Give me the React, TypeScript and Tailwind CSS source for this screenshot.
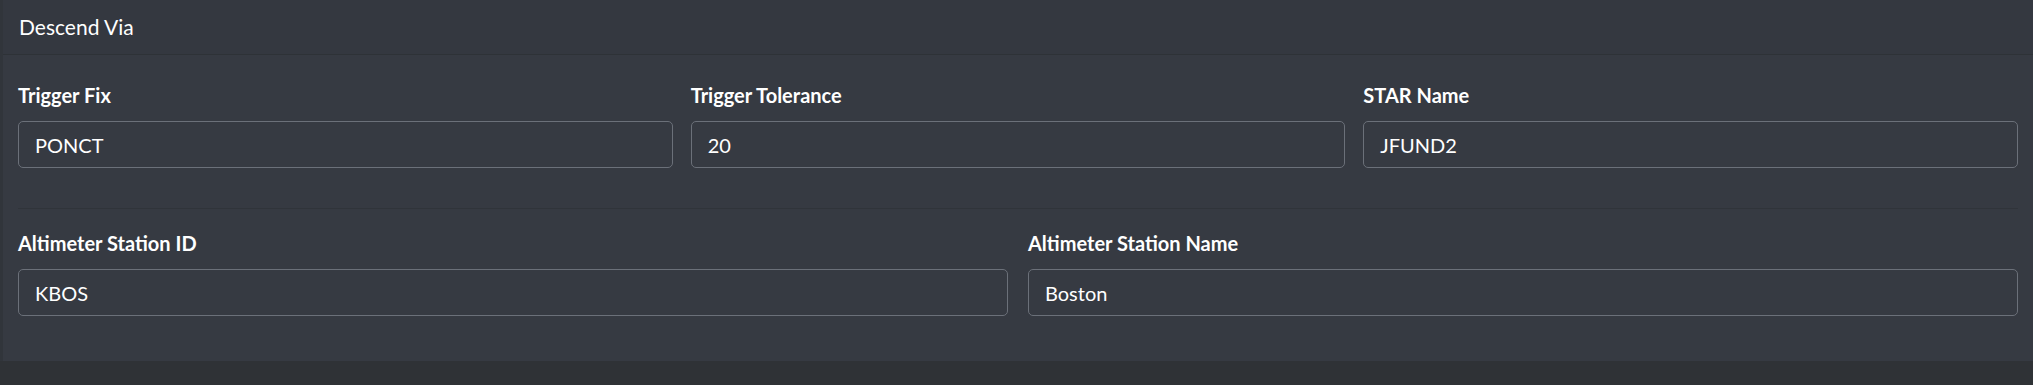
import React from "react"

type FieldProps = { label: string; value: string }

function Field({ label, value }: FieldProps) {
  return (
    <div className="flex flex-col">
      <label className="mb-[10px] h-[31px] text-[20px] font-bold leading-[31px] text-white">{label}</label>
      <div className="flex h-[47px] items-center rounded-[5px] border border-[#6b7079] bg-[#363a42] px-[16px] text-[20px] text-white">
        {value}
      </div>
    </div>
  )
}

export default function App() {
  return (
    <div
      className="h-[385px] w-full bg-[#2f3236]"
      style={{ fontFamily: '"Lato", "Noto Sans", sans-serif' }}
    >
      <div className="h-[361px] border-l-[3px] border-[#31353b] bg-[#363a42]">
        <div className="flex h-[55px] items-center border-b border-[#2e3237] bg-[#343840] px-[16px] text-[21px] text-white">
          Descend Via
        </div>
        <div className="px-[15px] pt-[25px]">
          <div className="grid grid-cols-3 gap-[18px]">
            <Field label="Trigger Fix" value="PONCT" />
            <Field label="Trigger Tolerance" value="20" />
            <Field label="STAR Name" value="JFUND2" />
          </div>
          <div className="mt-[40px] h-px bg-[#30343a]" />
          <div className="mt-[19px] grid grid-cols-2 gap-[20px]">
            <Field label="Altimeter Station ID" value="KBOS" />
            <Field label="Altimeter Station Name" value="Boston" />
          </div>
        </div>
      </div>
    </div>
  )
}
